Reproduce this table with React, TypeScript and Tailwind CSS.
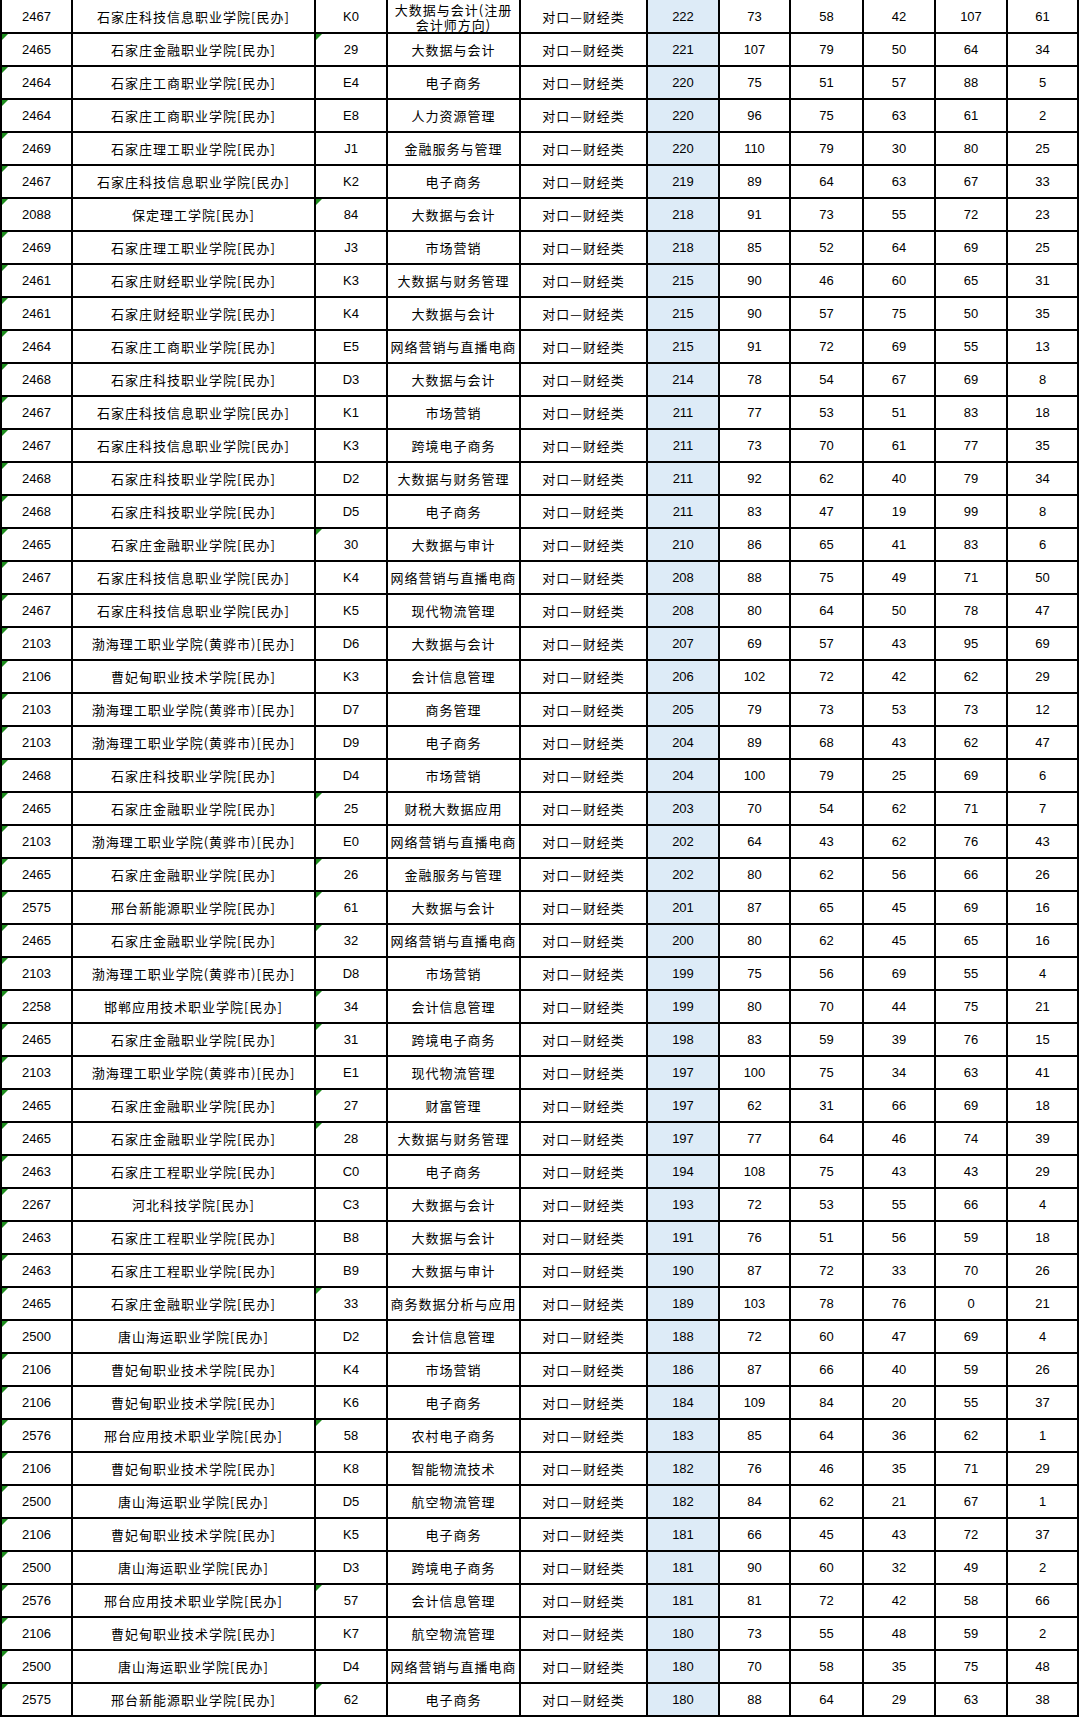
type Row = [string, string, string, string, number, number, number, number, number, number]

const rows: Row[] = [
  ['2467', '石家庄科技信息职业学院[民办]', 'K0', '大数据与会计(注册会计师方向)', 222, 73, 58, 42, 107, 61],
  ['2465', '石家庄金融职业学院[民办]', '29', '大数据与会计', 221, 107, 79, 50, 64, 34],
  ['2464', '石家庄工商职业学院[民办]', 'E4', '电子商务', 220, 75, 51, 57, 88, 5],
  ['2464', '石家庄工商职业学院[民办]', 'E8', '人力资源管理', 220, 96, 75, 63, 61, 2],
  ['2469', '石家庄理工职业学院[民办]', 'J1', '金融服务与管理', 220, 110, 79, 30, 80, 25],
  ['2467', '石家庄科技信息职业学院[民办]', 'K2', '电子商务', 219, 89, 64, 63, 67, 33],
  ['2088', '保定理工学院[民办]', '84', '大数据与会计', 218, 91, 73, 55, 72, 23],
  ['2469', '石家庄理工职业学院[民办]', 'J3', '市场营销', 218, 85, 52, 64, 69, 25],
  ['2461', '石家庄财经职业学院[民办]', 'K3', '大数据与财务管理', 215, 90, 46, 60, 65, 31],
  ['2461', '石家庄财经职业学院[民办]', 'K4', '大数据与会计', 215, 90, 57, 75, 50, 35],
  ['2464', '石家庄工商职业学院[民办]', 'E5', '网络营销与直播电商', 215, 91, 72, 69, 55, 13],
  ['2468', '石家庄科技职业学院[民办]', 'D3', '大数据与会计', 214, 78, 54, 67, 69, 8],
  ['2467', '石家庄科技信息职业学院[民办]', 'K1', '市场营销', 211, 77, 53, 51, 83, 18],
  ['2467', '石家庄科技信息职业学院[民办]', 'K3', '跨境电子商务', 211, 73, 70, 61, 77, 35],
  ['2468', '石家庄科技职业学院[民办]', 'D2', '大数据与财务管理', 211, 92, 62, 40, 79, 34],
  ['2468', '石家庄科技职业学院[民办]', 'D5', '电子商务', 211, 83, 47, 19, 99, 8],
  ['2465', '石家庄金融职业学院[民办]', '30', '大数据与审计', 210, 86, 65, 41, 83, 6],
  ['2467', '石家庄科技信息职业学院[民办]', 'K4', '网络营销与直播电商', 208, 88, 75, 49, 71, 50],
  ['2467', '石家庄科技信息职业学院[民办]', 'K5', '现代物流管理', 208, 80, 64, 50, 78, 47],
  ['2103', '渤海理工职业学院(黄骅市)[民办]', 'D6', '大数据与会计', 207, 69, 57, 43, 95, 69],
  ['2106', '曹妃甸职业技术学院[民办]', 'K3', '会计信息管理', 206, 102, 72, 42, 62, 29],
  ['2103', '渤海理工职业学院(黄骅市)[民办]', 'D7', '商务管理', 205, 79, 73, 53, 73, 12],
  ['2103', '渤海理工职业学院(黄骅市)[民办]', 'D9', '电子商务', 204, 89, 68, 43, 62, 47],
  ['2468', '石家庄科技职业学院[民办]', 'D4', '市场营销', 204, 100, 79, 25, 69, 6],
  ['2465', '石家庄金融职业学院[民办]', '25', '财税大数据应用', 203, 70, 54, 62, 71, 7],
  ['2103', '渤海理工职业学院(黄骅市)[民办]', 'E0', '网络营销与直播电商', 202, 64, 43, 62, 76, 43],
  ['2465', '石家庄金融职业学院[民办]', '26', '金融服务与管理', 202, 80, 62, 56, 66, 26],
  ['2575', '邢台新能源职业学院[民办]', '61', '大数据与会计', 201, 87, 65, 45, 69, 16],
  ['2465', '石家庄金融职业学院[民办]', '32', '网络营销与直播电商', 200, 80, 62, 45, 65, 16],
  ['2103', '渤海理工职业学院(黄骅市)[民办]', 'D8', '市场营销', 199, 75, 56, 69, 55, 4],
  ['2258', '邯郸应用技术职业学院[民办]', '34', '会计信息管理', 199, 80, 70, 44, 75, 21],
  ['2465', '石家庄金融职业学院[民办]', '31', '跨境电子商务', 198, 83, 59, 39, 76, 15],
  ['2103', '渤海理工职业学院(黄骅市)[民办]', 'E1', '现代物流管理', 197, 100, 75, 34, 63, 41],
  ['2465', '石家庄金融职业学院[民办]', '27', '财富管理', 197, 62, 31, 66, 69, 18],
  ['2465', '石家庄金融职业学院[民办]', '28', '大数据与财务管理', 197, 77, 64, 46, 74, 39],
  ['2463', '石家庄工程职业学院[民办]', 'C0', '电子商务', 194, 108, 75, 43, 43, 29],
  ['2267', '河北科技学院[民办]', 'C3', '大数据与会计', 193, 72, 53, 55, 66, 4],
  ['2463', '石家庄工程职业学院[民办]', 'B8', '大数据与会计', 191, 76, 51, 56, 59, 18],
  ['2463', '石家庄工程职业学院[民办]', 'B9', '大数据与审计', 190, 87, 72, 33, 70, 26],
  ['2465', '石家庄金融职业学院[民办]', '33', '商务数据分析与应用', 189, 103, 78, 76, 0, 21],
  ['2500', '唐山海运职业学院[民办]', 'D2', '会计信息管理', 188, 72, 60, 47, 69, 4],
  ['2106', '曹妃甸职业技术学院[民办]', 'K4', '市场营销', 186, 87, 66, 40, 59, 26],
  ['2106', '曹妃甸职业技术学院[民办]', 'K6', '电子商务', 184, 109, 84, 20, 55, 37],
  ['2576', '邢台应用技术职业学院[民办]', '58', '农村电子商务', 183, 85, 64, 36, 62, 1],
  ['2106', '曹妃甸职业技术学院[民办]', 'K8', '智能物流技术', 182, 76, 46, 35, 71, 29],
  ['2500', '唐山海运职业学院[民办]', 'D5', '航空物流管理', 182, 84, 62, 21, 67, 1],
  ['2106', '曹妃甸职业技术学院[民办]', 'K5', '电子商务', 181, 66, 45, 43, 72, 37],
  ['2500', '唐山海运职业学院[民办]', 'D3', '跨境电子商务', 181, 90, 60, 32, 49, 2],
  ['2576', '邢台应用技术职业学院[民办]', '57', '会计信息管理', 181, 81, 72, 42, 58, 66],
  ['2106', '曹妃甸职业技术学院[民办]', 'K7', '航空物流管理', 180, 73, 55, 48, 59, 2],
  ['2500', '唐山海运职业学院[民办]', 'D4', '网络营销与直播电商', 180, 70, 58, 35, 75, 48],
  ['2575', '邢台新能源职业学院[民办]', '62', '电子商务', 180, 88, 64, 29, 63, 38],
]

const cell = 'relative flex items-center justify-center border-r-2 border-b-2 border-black text-center'
const cjk = "font-['Noto_Sans_CJK_SC',sans-serif] text-[13px] tracking-[1px]"
const num = "font-['Liberation_Sans',Arial,sans-serif] text-[13px]"

// little green "number stored as text" corner mark
function Flag() {
  return <span className="absolute left-0 top-0 h-[6px] w-[6px] bg-[#1c8c1c] [clip-path:polygon(0_0,100%_0,0_100%)]" />
}

export default function App() {
  return (
    <div className="w-[1079px] border-l-2 border-black bg-white text-black">
      {rows.map((r, i) => {
        const first = i === 0
        const h = first ? 'h-[34px] pt-[2px]' : 'h-[33px]'
        const isNum = /^\d+$/.test(r[2])
        return (
          <div
            key={i}
            className="grid grid-cols-[71px_243px_72px_133px_127px_72px_71px_73px_72px_72px_71px]"
          >
            <div className={`${cell} ${h} ${num}`}>
              {!first && <Flag />}
              {r[0]}
            </div>
            <div className={`${cell} ${h} ${cjk}`}>{r[1]}</div>
            <div className={`${cell} ${h} ${num}`}>
              {isNum && <Flag />}
              {r[2]}
            </div>
            {first ? (
              <div className={`${cell} ${h} ${cjk} flex-col`}>
                <div className="h-[15px] leading-[15px]">大数据与会计(注册</div>
                <div className="h-[15px] leading-[15px]">会计师方向)</div>
              </div>
            ) : (
              <div className={`${cell} ${h} ${cjk}`}>{r[3]}</div>
            )}
            <div className={`${cell} ${h} ${cjk}`}>对口—财经类</div>
            <div className={`${cell} ${h} ${num} bg-[#ddebf7]`}>{r[4]}</div>
            <div className={`${cell} ${h} ${num}`}>{r[5]}</div>
            <div className={`${cell} ${h} ${num}`}>{r[6]}</div>
            <div className={`${cell} ${h} ${num}`}>{r[7]}</div>
            <div className={`${cell} ${h} ${num}`}>{r[8]}</div>
            <div className={`${cell} ${h} ${num}`}>{r[9]}</div>
          </div>
        )
      })}
    </div>
  )
}
